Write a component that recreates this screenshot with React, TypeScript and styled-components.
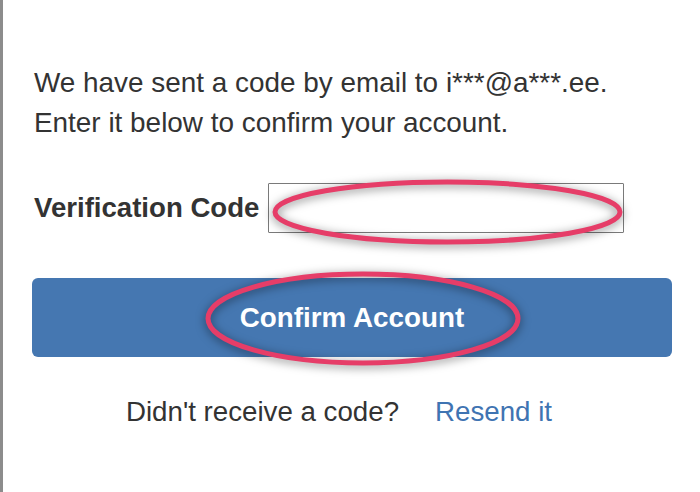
import React from "react";
import styled, { createGlobalStyle } from "styled-components";

const GlobalStyle = createGlobalStyle`
  html, body {
    margin: 0;
    padding: 0;
    background: #fff;
  }
  body {
    font-family: "Liberation Sans", Arial, sans-serif;
    color: #333;
  }
`;

const Frame = styled.div`
  min-height: 100vh;
  box-sizing: border-box;
  border-left: 3px solid #8c8c8c;
  padding: 63px 28px 0 31px;
  font-size: 27.6px;
`;

const Message = styled.p`
  margin: 0;
  font-size: 27.9px;
  line-height: 40px;
  color: #333;
`;

const CodeRow = styled.div`
  display: flex;
  align-items: center;
  gap: 9px;
  margin-top: 40px;
`;

const Label = styled.label`
  font-weight: bold;
  line-height: 40px;
  color: #333;
`;

const InputWrap = styled.div`
  position: relative;
`;

const CodeInput = styled.input`
  display: block;
  box-sizing: border-box;
  width: 356px;
  height: 50px;
  margin: 0;
  padding: 0 8px;
  border: 1px solid #7a7a7a;
  border-radius: 1px;
  background: #fff;
  font: inherit;
  outline: none;
`;

const ConfirmButton = styled.button`
  position: relative;
  display: block;
  width: calc(100% + 2px);
  height: 79px;
  margin: 45px 0 0 -2px;
  border: none;
  border-radius: 6px;
  background: #4577b1;
  color: #fff;
  font-family: inherit;
  font-size: 27.8px;
  font-weight: bold;
  cursor: pointer;
`;

const Footer = styled.div`
  display: flex;
  justify-content: center;
  gap: 36px;
  margin-top: 35px;
  padding-right: 28px;
  font-size: 27.7px;
  line-height: 40px;
`;

const ResendLink = styled.a`
  color: #3f74b2;
  text-decoration: none;
  cursor: pointer;
`;

const Ring = styled.svg<{ $x: number; $y: number; $w: number; $h: number }>`
  position: absolute;
  left: ${(p) => p.$x}px;
  top: ${(p) => p.$y}px;
  width: ${(p) => p.$w}px;
  height: ${(p) => p.$h}px;
  overflow: visible;
  pointer-events: none;
  filter: drop-shadow(0 2px 5px rgba(0, 0, 0, 0.5));
`;

const Highlight: React.FC<{ x: number; y: number; w: number; h: number }> = ({
  x,
  y,
  w,
  h,
}) => (
  <Ring $x={x} $y={y} $w={w} $h={h} viewBox={`0 0 ${w} ${h}`}>
    <ellipse
      cx={w / 2}
      cy={h / 2}
      rx={w / 2}
      ry={h / 2}
      fill="none"
      stroke="#e63d68"
      strokeWidth={5}
    />
  </Ring>
);

export default function App() {
  return (
    <>
      <GlobalStyle />
      <Frame>
        <Message>
          We have sent a code by email to i***@a***.ee.
          <br />
          Enter it below to confirm your account.
        </Message>

        <CodeRow>
          <Label htmlFor="code">Verification Code</Label>
          <InputWrap>
            <CodeInput id="code" type="text" />
            <Highlight x={7} y={-1} w={345} h={60} />
          </InputWrap>
        </CodeRow>

        <ConfirmButton type="button">
          Confirm Account
          <Highlight x={176} y={-4} w={310} h={89} />
        </ConfirmButton>

        <Footer>
          <span>Didn't receive a code?</span>
          <ResendLink>Resend it</ResendLink>
        </Footer>
      </Frame>
    </>
  );
}
